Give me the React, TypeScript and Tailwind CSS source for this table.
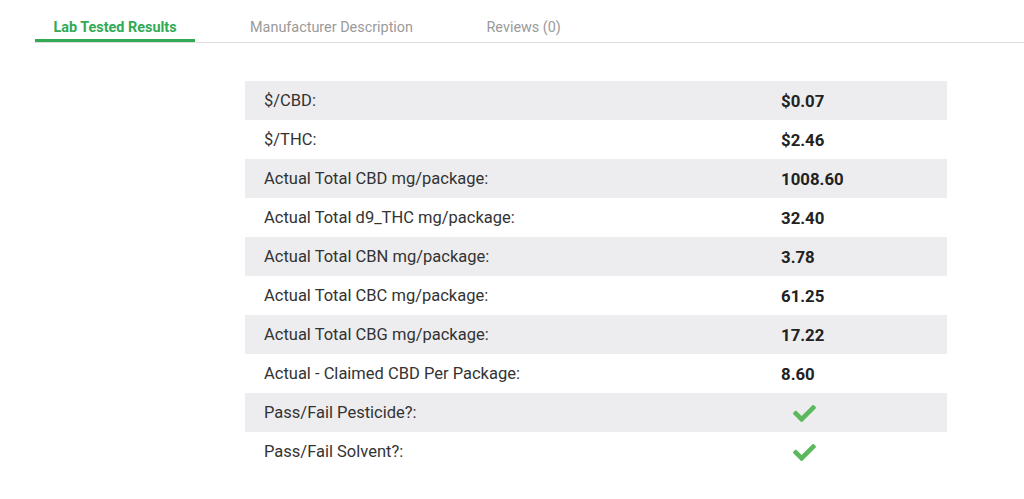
import { FaCheck } from "react-icons/fa";

const rows: { label: string; value?: string; pass?: boolean }[] = [
  { label: "$/CBD:", value: "$0.07" },
  { label: "$/THC:", value: "$2.46" },
  { label: "Actual Total CBD mg/package:", value: "1008.60" },
  { label: "Actual Total d9_THC mg/package:", value: "32.40" },
  { label: "Actual Total CBN mg/package:", value: "3.78" },
  { label: "Actual Total CBC mg/package:", value: "61.25" },
  { label: "Actual Total CBG mg/package:", value: "17.22" },
  { label: "Actual - Claimed CBD Per Package:", value: "8.60" },
  { label: "Pass/Fail Pesticide?:", pass: true },
  { label: "Pass/Fail Solvent?:", pass: true },
];

const tabs = ["Lab Tested Results", "Manufacturer Description", "Reviews (0)"];

export default function App() {
  return (
    <div
      className="min-h-[499px] w-[1024px] bg-white"
      style={{ fontFamily: "Roboto, 'Liberation Sans', sans-serif" }}
    >
      {/* Tabs */}
      <div className="pl-[35px]">
        <div className="flex gap-[36.5px] border-b border-[#dddddd]">
          {tabs.map((tab, i) => (
            <div
              key={tab}
              className={
                i === 0
                  ? "border-b-[3px] border-[#31a955] px-[18.5px] pt-[18px] pb-[1px] text-[14.4px] leading-[20px] font-bold text-[#31a955]"
                  : "border-b-[3px] border-transparent px-[18.5px] pt-[18px] pb-[1px] text-[14.4px] leading-[20px] text-[#9a9a9a]"
              }
            >
              {tab}
            </div>
          ))}
        </div>
      </div>

      {/* Results table */}
      <div className="mt-[38px] ml-[245px] w-[702px]">
        {rows.map((row, i) => (
          <div
            key={row.label}
            className={`grid h-[39px] grid-cols-[536px_1fr] items-center pt-[2px] text-[16.5px] ${
              i % 2 === 0 ? "bg-[#ededef]" : "bg-white"
            }`}
          >
            <div className="pl-[19px] text-[#333333]">{row.label}</div>
            <div className="text-[16.8px] font-bold text-[#222222]">
              {row.pass ? (
                <FaCheck className="ml-[12px] text-[#5cb85c]" size={23} />
              ) : (
                row.value
              )}
            </div>
          </div>
        ))}
      </div>
    </div>
  );
}
